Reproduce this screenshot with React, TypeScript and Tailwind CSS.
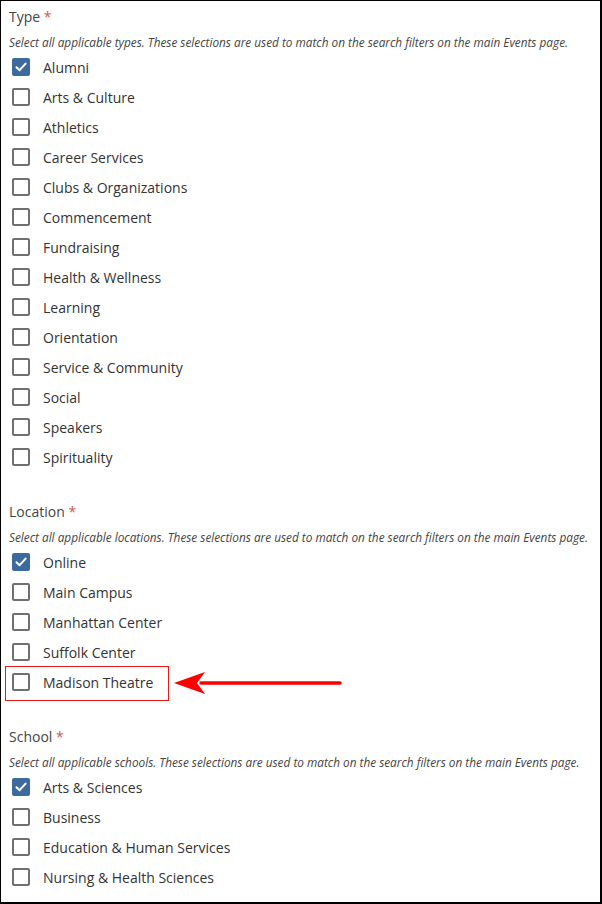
import React from "react";

type Item = { label: string; checked?: boolean; highlight?: boolean };

const sections: { title: string; desc: string; gap: string; items: Item[] }[] = [
  {
    title: "Type",
    gap: "",
    desc: "Select all applicable types. These selections are used to match on the search filters on the main Events page.",
    items: [
      { label: "Alumni", checked: true },
      { label: "Arts & Culture" },
      { label: "Athletics" },
      { label: "Career Services" },
      { label: "Clubs & Organizations" },
      { label: "Commencement" },
      { label: "Fundraising" },
      { label: "Health & Wellness" },
      { label: "Learning" },
      { label: "Orientation" },
      { label: "Service & Community" },
      { label: "Social" },
      { label: "Speakers" },
      { label: "Spirituality" },
    ],
  },
  {
    title: "Location",
    gap: "mt-[30px]",
    desc: "Select all applicable locations. These selections are used to match on the search filters on the main Events page.",
    items: [
      { label: "Online", checked: true },
      { label: "Main Campus" },
      { label: "Manhattan Center" },
      { label: "Suffolk Center" },
      { label: "Madison Theatre", highlight: true },
    ],
  },
  {
    title: "School",
    gap: "mt-[30px]",
    desc: "Select all applicable schools. These selections are used to match on the search filters on the main Events page.",
    items: [
      { label: "Arts & Sciences", checked: true },
      { label: "Business" },
      { label: "Education & Human Services" },
      { label: "Nursing & Health Sciences" },
    ],
  },
];

function Box({ checked }: { checked?: boolean }) {
  if (checked) {
    return (
      <span className="flex h-[18px] w-[18px] items-center justify-center rounded-[2px] bg-[#3d6a9c]">
        <svg width="14" height="14" viewBox="0 0 14 14">
          <path d="M2.5 7.2 L5.6 10.2 L11.6 3.6" fill="none" stroke="#fff" strokeWidth="2" strokeLinecap="round" strokeLinejoin="round" />
        </svg>
      </span>
    );
  }
  return <span className="block h-[18px] w-[18px] rounded-[2px] border-2 border-[#707070] bg-white" />;
}

export default function App() {
  return (
    <div
      className="h-[904px] w-[602px] overflow-hidden border-t border-l border-r-2 border-b-2 border-black bg-white pl-[8px] pt-[6px] text-[#333]"
      style={{ fontFamily: '"Open Sans", sans-serif' }}
    >
      {sections.map((s) => (
        <div key={s.title} className={s.gap}>
          <div className="h-[20px] text-[14px] leading-[20px] text-[#444]">
            {s.title} <span className="text-[#d9534f]">*</span>
          </div>
          <div className="mt-[7px] h-[16px] text-[11.8px] italic leading-[16px] text-[#444] whitespace-nowrap">{s.desc}</div>
          <div className="mt-[2px] flex flex-col">
            {s.items.map((it) => (
              <div key={it.label} className="relative flex h-[30px] items-center pl-[3px]">
                <Box checked={it.checked} />
                <span className="ml-[13px] text-[14px] text-[#333]">{it.label}</span>
                {it.highlight && (
                  <>
                    <span className="pointer-events-none absolute left-[-4px] top-[-1px] h-[35px] w-[164px] border border-[#e31b1b]" />
                    <svg className="absolute left-[164px] top-[4px]" width="180" height="26" viewBox="0 0 180 26">
                      <line x1="28" y1="12" x2="167" y2="12" stroke="#f00" strokeWidth="3.5" strokeLinecap="round" />
                      <path d="M1 12 L32 1 L24 12 L32 23 Z" fill="#f00" />
                    </svg>
                  </>
                )}
              </div>
            ))}
          </div>
        </div>
      ))}
    </div>
  );
}
